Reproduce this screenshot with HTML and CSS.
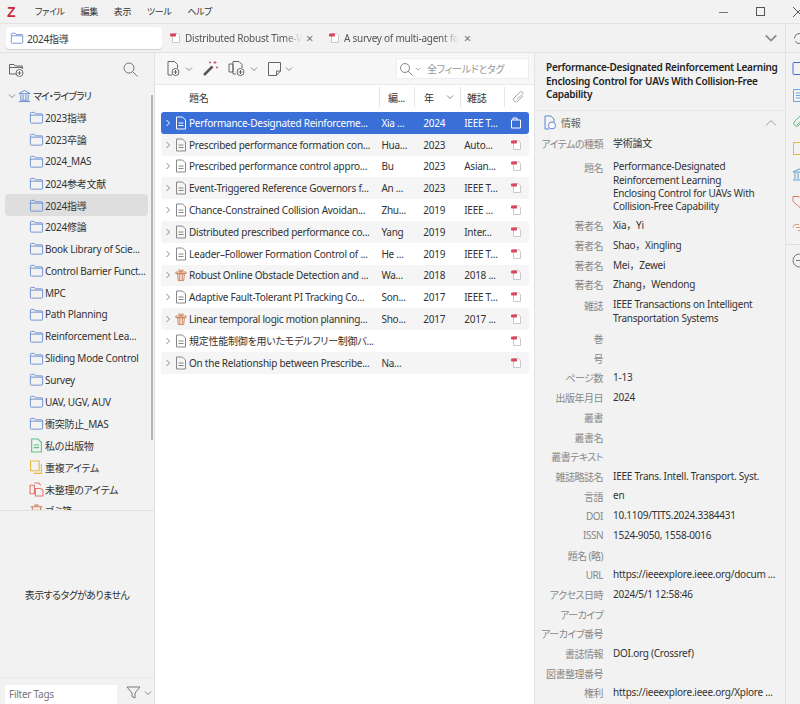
FILE: index.html
```html
<!DOCTYPE html>
<html lang="ja">
<head>
    <meta charset="UTF-8">
    <meta name="viewport" content="width=device-width, initial-scale=1.0">
    <title>Zotero</title>
    <link rel="stylesheet" href="styles.css">
</head>
<body>
    <svg class="defs" width="0" height="0">
        <symbol id="folder" viewBox="0 0 16 16"><path d="M1.5 13V3.5a1 1 0 0 1 1-1h3.200l1.300 1.600h6.500a1 1 0 0 1 1 1V13a1 1 0 0 1-1 1h-11a1 1 0 0 1-1-1zM1.500 5.500h13" fill="none" stroke="#6d8fd0"/></symbol>
        <symbol id="pdf" viewBox="0 0 12 12"><path d="M3.500 1.500h5l2 2v7h-7z" fill="#fff" stroke="#c9c9c9"/><rect x="1" y="1.500" width="6" height="3" rx=".8" fill="#d9455f"/></symbol>
        <symbol id="doc" viewBox="0 0 12 14"><path d="M1.500 1h6l3 3v9h-9zM3.500 7h5M3.500 9.500h5" fill="none" stroke="currentColor"/></symbol>
        <symbol id="gift" viewBox="0 0 14 14"><path d="M1 3.500h12v2H1zM3 5.500h8l-.8 8H3.800zM5.500 5.500v8M8.500 5.500v8M7 3.500C5 3 4 2 4.500 1S7 1.500 7 3.500C7 1.500 9 0 9.500 1S9 3 7 3.500z" fill="#f7e6da" stroke="#c8805c"/></symbol>
        <symbol id="chev-r" viewBox="0 0 8 8"><path d="M2.500 1l3 3-3 3" fill="none" stroke="currentColor"/></symbol>
        <symbol id="chev-d" viewBox="0 0 8 8"><path d="M1 2.500l3 3 3-3" fill="none" stroke="#8a8a8a"/></symbol>
    </svg>

    <div class="titlebar">
        <span class="logo">Z</span>
        <span class="menu">ファイル</span>
        <span class="menu">編集</span>
        <span class="menu">表示</span>
        <span class="menu">ツール</span>
        <span class="menu">ヘルプ</span>
        <div class="winbtns">
            <svg width="12" height="12" viewBox="0 0 12 12"><path d="M1 6.500h9" stroke="#777"/></svg>
            <svg width="12" height="12" viewBox="0 0 12 12"><rect x="1.500" y="1.500" width="8" height="8" fill="none" stroke="#555"/></svg>
            <svg width="12" height="12" viewBox="0 0 12 12"><path d="M1 1l10 10M11 1L1 11" stroke="#555"/></svg>
        </div>
    </div>

    <div class="tabbar">
        <div class="tab active"><svg width="14" height="14"><use href="#folder"/></svg>2024指導</div>
        <div class="tab"><svg width="12" height="12"><use href="#pdf"/></svg><span class="tab-title">Distributed Robust Time-V</span><span class="tab-x">×</span></div>
        <div class="tab"><svg width="12" height="12"><use href="#pdf"/></svg><span class="tab-title">A survey of multi-agent fo</span><span class="tab-x">×</span></div>
        <svg class="tab-menu" width="14" height="14" viewBox="0 0 8 8"><use href="#chev-d"/></svg>
        <div class="tab-side">
            <svg width="15" height="15" viewBox="0 0 16 16"><path d="M2.500 8a5.500 5.500 0 0 1 10-3M13.500 8a5.500 5.500 0 0 1-10 3" fill="none" stroke="#666"/></svg>
        </div>
    </div>

    <div class="main">
        <aside class="left">
            <div class="left-tools">
                <svg width="17" height="17" viewBox="0 0 17 17"><path d="M1.500 13V3.500h4.500l1.300 1.500h7V8M1.500 6.500h13M1.500 13H8" fill="none" stroke="#666"/><circle cx="11.500" cy="12" r="3.500" fill="#fff" stroke="#666"/><path d="M9.500 12h4M11.500 10v4" stroke="#666"/></svg>
                <svg width="17" height="17" viewBox="0 0 17 17"><circle cx="7" cy="7" r="5" fill="none" stroke="#777"/><path d="M10.500 10.500l5 5" stroke="#777"/></svg>
            </div>
            <div class="collections">
                <div class="coll root"><svg width="8" height="8"><use href="#chev-d"/></svg>
                    <svg width="13" height="14" viewBox="0 0 14 14"><path d="M1 4.500L7 1l6 3.500zM1 13h12M2.500 11.500h9M3 5.500v5.500M5.500 5.500v5.500M8.500 5.500v5.500M11 5.500v5.500" fill="none" stroke="#5f86cf"/></svg>マイ・ライブラリ</div>
                <div class="coll"><svg width="15" height="15"><use href="#folder"/></svg><span>2023指導</span></div>
                <div class="coll"><svg width="15" height="15"><use href="#folder"/></svg><span>2023卒論</span></div>
                <div class="coll"><svg width="15" height="15"><use href="#folder"/></svg><span>2024_MAS</span></div>
                <div class="coll"><svg width="15" height="15"><use href="#folder"/></svg><span>2024参考文献</span></div>
                <div class="coll selected"><svg width="15" height="15"><use href="#folder"/></svg><span>2024指導</span></div>
                <div class="coll"><svg width="15" height="15"><use href="#folder"/></svg><span>2024修論</span></div>
                <div class="coll"><svg width="15" height="15"><use href="#folder"/></svg><span>Book Library of Scie...</span></div>
                <div class="coll"><svg width="15" height="15"><use href="#folder"/></svg><span>Control Barrier Funct...</span></div>
                <div class="coll"><svg width="15" height="15"><use href="#folder"/></svg><span>MPC</span></div>
                <div class="coll"><svg width="15" height="15"><use href="#folder"/></svg><span>Path Planning</span></div>
                <div class="coll"><svg width="15" height="15"><use href="#folder"/></svg><span>Reinforcement Lea...</span></div>
                <div class="coll"><svg width="15" height="15"><use href="#folder"/></svg><span>Sliding Mode Control</span></div>
                <div class="coll"><svg width="15" height="15"><use href="#folder"/></svg><span>Survey</span></div>
                <div class="coll"><svg width="15" height="15"><use href="#folder"/></svg><span>UAV, UGV, AUV</span></div>
                <div class="coll"><svg width="15" height="15"><use href="#folder"/></svg><span>衝突防止_MAS</span></div>
                <div class="coll"><svg width="15" height="15" viewBox="0 0 14 14"><path d="M2.500 1h6l3 3v9h-9zM4.500 6.500h5M4.500 9h5" fill="none" stroke="#5cbf85"/></svg><span>私の出版物</span></div>
                <div class="coll"><svg width="15" height="15" viewBox="0 0 14 14"><path d="M1.500 1h8v9h-8zM11.500 4v8.500h-7" fill="none" stroke="#e8b93c"/></svg><span>重複アイテム</span></div>
                <div class="coll"><svg width="15" height="15" viewBox="0 0 14 14"><path d="M1 3h4v8H1zM5 1h4l2 2M6 6h5l2 2v5H6z" fill="none" stroke="#e8756a"/></svg><span>未整理のアイテム</span></div>
                <div class="coll"><svg width="15" height="15" viewBox="0 0 14 14"><path d="M1.500 3.500h11M3 3.500l.7 9.500h6.600l.7-9.500M5 2h4M5.500 6v5M8.500 6v5" fill="none" stroke="#c8805c"/></svg><span>ゴミ箱</span></div>
                <div class="left-scroll"></div>
            </div>
            <div class="tags">
                <div class="tags-empty">表示するタグがありません</div>
                <div class="tags-bottom">
                    <div class="filter-input">Filter Tags</div>
                    <svg width="15" height="15" viewBox="0 0 15 15"><path d="M1 2h13L9 8v5l-3-1.500V8z" fill="none" stroke="#777"/></svg>
                    <svg width="8" height="8"><use href="#chev-d"/></svg>
                </div>
            </div>
        </aside>

        <section class="center">
            <div class="toolbar">
                <div class="tool-group">
                    <svg width="17" height="17" viewBox="0 0 17 17"><path d="M3 1.500h6.500l3 3V8M3 1.500V15h4" fill="none" stroke="#666"/><circle cx="10.500" cy="12" r="3.500" fill="#fff" stroke="#666"/><path d="M8.500 12h4M10.500 10v4" stroke="#666"/></svg>
                    <svg width="8" height="8"><use href="#chev-d"/></svg>
                </div>
                <svg width="17" height="17" viewBox="0 0 17 17"><path d="M2 15L10.500 6.500" stroke="#555" stroke-width="2.500"/><path d="M13 1v3M11.500 2.500h3M15 6.500v2M14 7.500h2M8 1.500v2M7 2.500h2" stroke="#d0527a"/></svg>
                <div class="tool-group">
                    <svg width="19" height="17" viewBox="0 0 19 17"><path d="M1 4h4v8H1zM5 1.500h6l3 3V8M5 1.500V14h3" fill="none" stroke="#666"/><circle cx="12.500" cy="12" r="3.500" fill="#fff" stroke="#666"/><path d="M10.500 12h4M12.500 10v4" stroke="#666"/></svg>
                    <svg width="8" height="8"><use href="#chev-d"/></svg>
                </div>
                <div class="tool-group">
                    <svg width="15" height="16" viewBox="0 0 15 16"><path d="M1.500 1.500h12V10l-4 4.500h-8zM9.500 14.500V10h4" fill="none" stroke="#666"/></svg>
                    <svg width="8" height="8"><use href="#chev-d"/></svg>
                </div>
                <div class="search">
                    <svg width="14" height="14" viewBox="0 0 14 14"><circle cx="6" cy="6" r="4.500" fill="none" stroke="#888"/><path d="M9 9l4.500 4.500" stroke="#888"/></svg>
                    <svg width="6" height="6" viewBox="0 0 8 8"><use href="#chev-d"/></svg>
                    <span>全フィールドとタグ</span>
                </div>
            </div>

            <div class="thead">
                <div class="th th-title">題名</div>
                <div class="th th-author">編...</div>
                <div class="th th-year">年<svg width="8" height="8"><use href="#chev-d"/></svg></div>
                <div class="th th-pub">雑誌</div>
                <div class="th th-att"><svg width="14" height="14" viewBox="0 0 14 14"><path d="M12 6l-5.500 5.500a2.500 2.500 0 0 1-3.500-3.500l6-6a1.700 1.700 0 0 1 2.500 2.500L5.500 9.500" fill="none" stroke="#aaa"/></svg></div>
            </div>

            <div class="rows">
                <div class="row selected">
                    <svg class="twisty" width="8" height="8"><use href="#chev-r"/></svg><svg class="type" width="12" height="14"><use href="#doc"/></svg>
                    <div class="col-title">Performance-Designated Reinforceme...</div><div class="col-author">Xia ...</div><div class="col-year">2024</div><div class="col-pub">IEEE T...</div>
                    <div class="col-att"><svg width="12" height="12" viewBox="0 0 12 12"><path d="M1.500 3h9v8h-9zM3 3V1h4v2" fill="none" stroke="#fff"/></svg></div>
                </div>
                <div class="row">
                    <svg class="twisty" width="8" height="8"><use href="#chev-r"/></svg><svg class="type" width="12" height="14"><use href="#doc"/></svg>
                    <div class="col-title">Prescribed performance formation con...</div><div class="col-author">Hua...</div><div class="col-year">2023</div><div class="col-pub">Auto...</div>
                    <div class="col-att"><svg width="12" height="12"><use href="#pdf"/></svg></div>
                </div>
                <div class="row">
                    <svg class="twisty" width="8" height="8"><use href="#chev-r"/></svg><svg class="type" width="12" height="14"><use href="#doc"/></svg>
                    <div class="col-title">Prescribed performance control appro...</div><div class="col-author">Bu</div><div class="col-year">2023</div><div class="col-pub">Asian...</div>
                    <div class="col-att"><svg width="12" height="12"><use href="#pdf"/></svg></div>
                </div>
                <div class="row">
                    <svg class="twisty" width="8" height="8"><use href="#chev-r"/></svg><svg class="type" width="12" height="14"><use href="#doc"/></svg>
                    <div class="col-title">Event-Triggered Reference Governors f...</div><div class="col-author">An ...</div><div class="col-year">2023</div><div class="col-pub">IEEE T...</div>
                    <div class="col-att"><svg width="12" height="12"><use href="#pdf"/></svg></div>
                </div>
                <div class="row">
                    <svg class="twisty" width="8" height="8"><use href="#chev-r"/></svg><svg class="type" width="12" height="14"><use href="#doc"/></svg>
                    <div class="col-title">Chance-Constrained Collision Avoidan...</div><div class="col-author">Zhu...</div><div class="col-year">2019</div><div class="col-pub">IEEE ...</div>
                    <div class="col-att"><svg width="12" height="12"><use href="#pdf"/></svg></div>
                </div>
                <div class="row">
                    <svg class="twisty" width="8" height="8"><use href="#chev-r"/></svg><svg class="type" width="12" height="14"><use href="#doc"/></svg>
                    <div class="col-title">Distributed prescribed performance co...</div><div class="col-author">Yang</div><div class="col-year">2019</div><div class="col-pub">Inter...</div>
                    <div class="col-att"><svg width="12" height="12"><use href="#pdf"/></svg></div>
                </div>
                <div class="row">
                    <svg class="twisty" width="8" height="8"><use href="#chev-r"/></svg><svg class="type" width="12" height="14"><use href="#doc"/></svg>
                    <div class="col-title">Leader–Follower Formation Control of ...</div><div class="col-author">He ...</div><div class="col-year">2019</div><div class="col-pub">IEEE T...</div>
                    <div class="col-att"><svg width="12" height="12"><use href="#pdf"/></svg></div>
                </div>
                <div class="row">
                    <svg class="twisty" width="8" height="8"><use href="#chev-r"/></svg><svg class="type" width="12" height="14"><use href="#gift"/></svg>
                    <div class="col-title">Robust Online Obstacle Detection and ...</div><div class="col-author">Wa...</div><div class="col-year">2018</div><div class="col-pub">2018 ...</div>
                    <div class="col-att"><svg width="12" height="12"><use href="#pdf"/></svg></div>
                </div>
                <div class="row">
                    <svg class="twisty" width="8" height="8"><use href="#chev-r"/></svg><svg class="type" width="12" height="14"><use href="#doc"/></svg>
                    <div class="col-title">Adaptive Fault-Tolerant PI Tracking Co...</div><div class="col-author">Son...</div><div class="col-year">2017</div><div class="col-pub">IEEE T...</div>
                    <div class="col-att"><svg width="12" height="12"><use href="#pdf"/></svg></div>
                </div>
                <div class="row">
                    <svg class="twisty" width="8" height="8"><use href="#chev-r"/></svg><svg class="type" width="12" height="14"><use href="#gift"/></svg>
                    <div class="col-title">Linear temporal logic motion planning...</div><div class="col-author">Sho...</div><div class="col-year">2017</div><div class="col-pub">2017 ...</div>
                    <div class="col-att"><svg width="12" height="12"><use href="#pdf"/></svg></div>
                </div>
                <div class="row">
                    <svg class="twisty" width="8" height="8"><use href="#chev-r"/></svg><svg class="type" width="12" height="14"><use href="#doc"/></svg>
                    <div class="col-title">規定性能制御を用いたモデルフリー制御バ...</div><div class="col-author"></div><div class="col-year"></div><div class="col-pub"></div>
                    <div class="col-att"><svg width="12" height="12"><use href="#pdf"/></svg></div>
                </div>
                <div class="row">
                    <svg class="twisty" width="8" height="8"><use href="#chev-r"/></svg><svg class="type" width="12" height="14"><use href="#doc"/></svg>
                    <div class="col-title">On the Relationship between Prescribe...</div><div class="col-author">Na...</div><div class="col-year"></div><div class="col-pub"></div>
                    <div class="col-att"><svg width="12" height="12"><use href="#pdf"/></svg></div>
                </div>
            </div>
        </section>

        <section class="detail">
            <h1 class="detail-title">Performance-Designated Reinforcement Learning Enclosing Control for UAVs With Collision-Free Capability</h1>
            <div class="detail-head">
                <svg width="14" height="15" viewBox="0 0 14 15"><path d="M2 1h6l3 3v3M2 1v13h4" fill="none" stroke="#5f86cf"/><circle cx="9" cy="10.500" r="3.500" fill="#fff" stroke="#5f86cf"/></svg>
                <span>情報</span>
                <svg class="collapse" width="12" height="12" viewBox="0 0 12 12"><path d="M1 8.500l5-5 5 5" fill="none" stroke="#999"/></svg>
            </div>
            <div class="fields">
                <div class="field"><label>アイテムの種類</label><div>学術論文</div></div>
                <div class="field f-title"><label>題名</label><div>Performance-Designated<br>Reinforcement Learning<br>Enclosing Control for UAVs With<br>Collision-Free Capability</div></div>
                <div class="field"><label>著者名</label><div>Xia，Yi</div></div>
                <div class="field"><label>著者名</label><div>Shao，Xingling</div></div>
                <div class="field"><label>著者名</label><div>Mei，Zewei</div></div>
                <div class="field"><label>著者名</label><div>Zhang，Wendong</div></div>
                <div class="field f-two"><label>雑誌</label><div>IEEE Transactions on Intelligent<br>Transportation Systems</div></div>
                <div class="field"><label>巻</label><div></div></div>
                <div class="field"><label>号</label><div></div></div>
                <div class="field"><label>ページ数</label><div>1-13</div></div>
                <div class="field"><label>出版年月日</label><div>2024</div></div>
                <div class="field"><label>叢書</label><div></div></div>
                <div class="field"><label>叢書名</label><div></div></div>
                <div class="field"><label>叢書テキスト</label><div></div></div>
                <div class="field"><label>雑誌略誌名</label><div>IEEE Trans. Intell. Transport. Syst.</div></div>
                <div class="field"><label>言語</label><div>en</div></div>
                <div class="field"><label>DOI</label><div>10.1109/TITS.2024.3384431</div></div>
                <div class="field"><label>ISSN</label><div>1524-9050, 1558-0016</div></div>
                <div class="field"><label>題名 (略)</label><div></div></div>
                <div class="field"><label>URL</label><div>https://ieeexplore.ieee.org/docum ...</div></div>
                <div class="field"><label>アクセス日時</label><div>2024/5/1 12:58:46</div></div>
                <div class="field"><label>アーカイブ</label><div></div></div>
                <div class="field"><label>アーカイブ番号</label><div></div></div>
                <div class="field"><label>書誌情報</label><div>DOI.org (Crossref)</div></div>
                <div class="field"><label>図書整理番号</label><div></div></div>
                <div class="field"><label>権利</label><div>https://ieeexplore.ieee.org/Xplore ...</div></div>
            </div>
        </section>

        <nav class="rail">
            <svg width="15" height="15" viewBox="0 0 15 15"><rect x="1" y="1.500" width="12" height="12" rx="1" fill="none" stroke="#3f6fd6"/></svg>
            <svg width="15" height="15" viewBox="0 0 15 15"><path d="M1.500 1.500h10v12h-10zM4 5h5M4 7.500h5M4 10h5" fill="none" stroke="#6ba5dc"/></svg>
            <svg width="15" height="15" viewBox="0 0 15 15"><path d="M12 6l-6 6a3 3 0 0 1-4-4l6-6a2 2 0 0 1 3 3l-6 6" fill="none" stroke="#5cbf85"/></svg>
            <svg width="15" height="15" viewBox="0 0 15 15"><rect x="1.500" y="1.500" width="11" height="12" fill="none" stroke="#e8b93c"/></svg>
            <svg width="15" height="15" viewBox="0 0 15 15"><path d="M1 5l6-3 6 3zM1 13h12M3 6v6M6 6v6M9 6v6M12 6v6" fill="none" stroke="#5ba3c9"/></svg>
            <svg width="15" height="15" viewBox="0 0 15 15"><path d="M1 2.500h6l6 6-5 5-7-6z" fill="none" stroke="#e8756a"/></svg>
            <svg width="15" height="15" viewBox="0 0 15 15"><path d="M1 7.500a3 3 0 0 1 3-3h3M12 7.500a3 3 0 0 1-3 3H6M4 7.500h6" fill="none" stroke="#d99a80"/></svg>
            <div class="rail-sep"></div>
            <svg width="15" height="15" viewBox="0 0 15 15"><circle cx="7.500" cy="7.500" r="6.500" fill="none" stroke="#777"/><path d="M4 7.500h7" stroke="#777"/></svg>
        </nav>
    </div>
</body>
</html>
```

FILE: styles.css
```css
* {
    box-sizing: border-box;
}

html, body {
    margin: 0;
    height: 704px;
    overflow: hidden;
}

body {
    font-family: "Noto Sans", "Noto Sans CJK JP", sans-serif;
    font-size: 10px;
    letter-spacing: -0.25px;
    font-feature-settings: "palt";
    color: #333;
    background: #f2f2f2;
}

.defs {
    position: absolute;
}

svg {
    flex: none;
    display: block;
}

.titlebar {
    height: 24px;
    display: flex;
    align-items: center;
    padding-left: 7px;
    border-bottom: 1px solid #e2e2e2;
    font-size: 9px;
    letter-spacing: -0.4px;
}

.logo {
    width: 28px;
    font-family: "Liberation Sans", sans-serif;
    font-weight: bold;
    font-size: 14px;
    color: #cc2936;
}

.menu {
    margin-right: 16px;
}

.winbtns {
    margin-left: auto;
    display: flex;
    gap: 25px;
    margin-right: -4px;
}

.tabbar {
    height: 29px;
    display: flex;
    align-items: center;
    padding-left: 6px;
    border-bottom: 1px solid #e2e2e2;
    color: #555;
}

.tab {
    display: flex;
    align-items: center;
    gap: 4px;
    width: 159px;
    white-space: nowrap;
}

.tab.active {
    width: 156px;
    height: 22px;
    margin-right: 7px;
    padding-left: 4px;
    gap: 3px;
    background: #fff;
    border-radius: 4px;
    box-shadow: 0 1px 1px rgba(0, 0, 0, 0.15);
    color: #333;
}

.tab-title {
    -webkit-mask-image: linear-gradient(to right, #000 85%, transparent);
    mask-image: linear-gradient(to right, #000 85%, transparent);
}

.tab-x {
    margin-left: auto;
    margin-right: 16px;
    font-size: 13px;
    color: #777;
    line-height: 12px;
}

.tab-menu {
    margin-left: auto;
    margin-right: 7px;
}

.tab-side {
    width: 15px;
    height: 100%;
    display: flex;
    align-items: center;
    padding-left: 6px;
    border-left: 1px solid #e2e2e2;
    overflow: hidden;
}

.main {
    display: flex;
    height: 651px;
}

.left {
    width: 155px;
    display: flex;
    flex-direction: column;
    border-right: 1px solid #e2e2e2;
}

.left-tools {
    height: 32px;
    display: flex;
    justify-content: space-between;
    align-items: center;
    padding: 0 15px 0 8px;
}

.collections {
    height: 426px;
    overflow: hidden;
    position: relative;
    padding-left: 5px;
    border-bottom: 1px solid #e2e2e2;
}

.coll {
    height: 21.85px;
    width: 143px;
    display: flex;
    align-items: center;
    gap: 1px;
    padding-left: 24px;
    white-space: nowrap;
}

.coll.root {
    padding-left: 3px;
    gap: 2px;
    letter-spacing: -1px;
}

.coll.selected {
    background: #dedede;
    border-radius: 4px;
}

.left-scroll {
    position: absolute;
    left: 151px;
    top: 10px;
    width: 2px;
    height: 345px;
    background: #b5b5b5;
}

.tags {
    flex: 1;
    display: flex;
    flex-direction: column;
}

.tags-empty {
    flex: 1;
    display: flex;
    align-items: center;
    justify-content: center;
    letter-spacing: -0.6px;
}

.tags-bottom {
    height: 27px;
    display: flex;
    align-items: flex-start;
    gap: 3px;
    padding: 7px 0 0 5px;
    border-top: 1px solid #e8e8e8;
}

.tags-bottom svg:last-child {
    margin-top: 4px;
}

.filter-input {
    width: 112px;
    height: 20px;
    margin-right: 6px;
    padding-left: 4px;
    line-height: 19px;
    background: #fff;
    color: #777;
}

.center {
    width: 380px;
    background: #fff;
    border-right: 1px solid #e2e2e2;
}

.toolbar {
    height: 32px;
    display: flex;
    align-items: center;
    gap: 9px;
    padding-left: 10px;
    background: #f7f7f7;
    border-bottom: 1px solid #e8e8e8;
}

.tool-group {
    display: flex;
    align-items: center;
    gap: 3px;
}

.search {
    width: 133px;
    height: 21px;
    margin-left: auto;
    margin-right: 5px;
    display: flex;
    align-items: center;
    gap: 2px;
    padding-left: 2px;
    background: #fff;
    border: 1px solid #ededed;
    color: #999;
}

.search span {
    margin-left: 4px;
}

.thead {
    height: 24px;
    display: flex;
    align-items: center;
    padding-left: 6px;
}

.th {
    height: 20px;
    display: flex;
    align-items: center;
    border-left: 1px solid #e6e6e6;
}

.th-title {
    width: 218px;
    padding-left: 28px;
    border-left: none;
}

.th-author {
    width: 35px;
    padding-left: 8px;
}

.th-year {
    width: 46px;
    padding-left: 9px;
    gap: 12px;
}

.th-pub {
    width: 44px;
    padding-left: 6px;
}

.th-att {
    width: 26px;
    padding-left: 6px;
}

.rows {
    padding: 3px 5px 0 6px;
}

.row {
    height: 21.8px;
    display: flex;
    align-items: center;
    padding-left: 3px;
    border-radius: 3px;
    white-space: nowrap;
}

.row:nth-child(even) {
    background: #f5f5f5;
}

.row.selected {
    background: #3a6fd8;
    color: #fff;
}

.twisty {
    margin-right: 3px;
    color: #8a8a8a;
}

.type {
    margin-right: 2px;
    color: #888;
}

.selected .twisty,
.selected .type {
    color: #fff;
}

.col-title {
    width: 190px;
}

.col-author {
    width: 35px;
    padding-left: 3px;
}

.col-year {
    width: 46px;
    padding-left: 10px;
}

.col-pub {
    width: 44px;
    padding-left: 5px;
}

.col-att {
    width: 26px;
    padding-left: 7px;
}

.detail {
    width: 250px;
    overflow: hidden;
}

.detail-title {
    margin: 0;
    height: 58px;
    padding: 8px 4px 0 11px;
    font-size: 10px;
    line-height: 13.5px;
    font-weight: 600;
    color: #222;
    border-bottom: 1px solid #e6e6e6;
}

.detail-head {
    height: 23px;
    display: flex;
    align-items: center;
    gap: 4px;
    padding-left: 8px;
    color: #666;
}

.collapse {
    margin-left: auto;
    margin-right: 8px;
}

.field {
    display: flex;
    min-height: 19.7px;
    align-items: center;
}

.field label {
    width: 68px;
    flex: none;
    text-align: right;
    color: #888;
    white-space: nowrap;
    letter-spacing: -0.5px;
}

.field div {
    margin-left: 10px;
    line-height: 13.4px;
    white-space: nowrap;
    font-feature-settings: normal;
}

.field.f-title {
    align-items: flex-start;
    padding-top: 6.5px;
    min-height: 62.3px;
}

.field.f-two {
    align-items: flex-start;
    padding-top: 3.5px;
    min-height: 34px;
}

.rail {
    width: 15px;
    display: flex;
    flex-direction: column;
    gap: 11.5px;
    padding: 8px 0 0 6px;
    border-left: 1px solid #e2e2e2;
    overflow: hidden;
}

.rail-sep {
    height: 1px;
    width: 15px;
    flex: none;
    margin: -3px 0 -3.5px -6px;
    background: #ddd;
}
```
